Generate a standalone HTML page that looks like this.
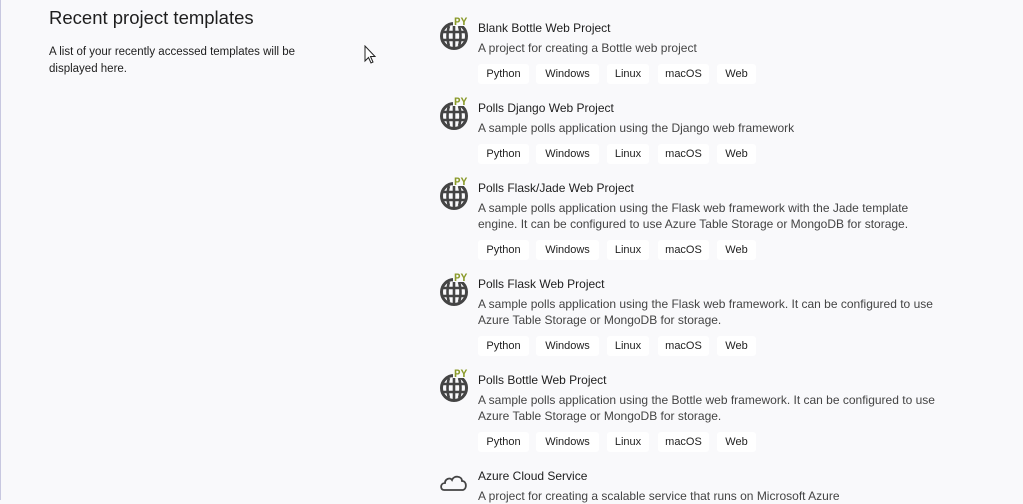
<!DOCTYPE html>
<html><head><style>
body{margin:0;width:1023px;height:500px;overflow:hidden;background:#f9f9fb;font-family:"Liberation Sans",sans-serif;color:#1e1e1e;position:relative}
.lb{position:absolute;left:0;top:0;width:1px;height:500px;background:#c8c8e0}
h1{position:absolute;left:49px;top:7px;margin:0;font-weight:normal;font-size:18.5px;color:#1e1e1e}
.p{position:absolute;left:49px;top:44px;font-size:11.5px;line-height:17px;width:280px}
.it{position:absolute;left:440px;width:520px}
.ic{position:absolute;left:0;top:-4px}
.t{position:absolute;left:38px;top:1px;font-size:12px;white-space:nowrap}
.d{position:absolute;left:38px;top:20px;font-size:12px;line-height:16px;color:#444;width:470px}
.tags{position:absolute;left:38px;height:20px;width:300px}
.tags span{position:absolute;top:0;background:#fff;border-radius:3px;font-size:11px;height:20px;line-height:20px;text-align:center;color:#222}
.tags span:nth-child(1){left:0;width:51px}
.tags span:nth-child(2){left:58px;width:63px}
.tags span:nth-child(3){left:129px;width:42px}
.tags span:nth-child(4){left:180px;width:51px}
.tags span:nth-child(5){left:239px;width:39px}
</style></head><body>
<div class="lb"></div>
<h1>Recent project templates</h1>
<div class="p">A list of your recently accessed templates will be displayed here.</div>
<svg style="position:absolute;left:364px;top:45px" width="14" height="20" viewBox="0 0 14 20"><path d="M1 1 L1 16 L4.5 12.5 L7 18 L9 17 L6.5 11.5 L11 11.5 Z" fill="#fff" stroke="#222" stroke-width="1"/></svg>

<svg width="0" height="0" style="position:absolute"><defs>
<g id="g"><circle cx="14" cy="20" r="12.5" fill="none" stroke="#444" stroke-width="3"/>
<path d="M3 16h22M3 24h22M14 8v24M9 10c-2 6-2 14 0 20M19 10c2 6 2 14 0 20" stroke="#444" stroke-width="2.6" fill="none"/>
<rect x="13" y="0" width="17" height="10" fill="#f9f9fb"/>
<text x="14" y="9" font-family="Liberation Mono,monospace" font-weight="bold" font-size="11" fill="#8a9a2a">PY</text></g></defs></svg>

<div class="it" style="top:20px"><svg class="ic" width="32" height="36"><use href="#g"/></svg><div class="t">Blank Bottle Web Project</div><div class="d">A project for creating a Bottle web project</div><div class="tags" style="top:44px"><span>Python</span><span>Windows</span><span>Linux</span><span>macOS</span><span>Web</span></div></div>

<div class="it" style="top:100px"><svg class="ic" width="32" height="36"><use href="#g"/></svg><div class="t">Polls Django Web Project</div><div class="d">A sample polls application using the Django web framework</div><div class="tags" style="top:44px"><span>Python</span><span>Windows</span><span>Linux</span><span>macOS</span><span>Web</span></div></div>

<div class="it" style="top:180px"><svg class="ic" width="32" height="36"><use href="#g"/></svg><div class="t">Polls Flask/Jade Web Project</div><div class="d">A sample polls application using the Flask web framework with the Jade template engine. It can be configured to use Azure Table Storage or MongoDB for storage.</div><div class="tags" style="top:60px"><span>Python</span><span>Windows</span><span>Linux</span><span>macOS</span><span>Web</span></div></div>

<div class="it" style="top:276px"><svg class="ic" width="32" height="36"><use href="#g"/></svg><div class="t">Polls Flask Web Project</div><div class="d">A sample polls application using the Flask web framework. It can be configured to use Azure Table Storage or MongoDB for storage.</div><div class="tags" style="top:60px"><span>Python</span><span>Windows</span><span>Linux</span><span>macOS</span><span>Web</span></div></div>

<div class="it" style="top:372px"><svg class="ic" width="32" height="36"><use href="#g"/></svg><div class="t">Polls Bottle Web Project</div><div class="d">A sample polls application using the Bottle web framework. It can be configured to use Azure Table Storage or MongoDB for storage.</div><div class="tags" style="top:60px"><span>Python</span><span>Windows</span><span>Linux</span><span>macOS</span><span>Web</span></div></div>

<div class="it" style="top:468px"><svg class="ic" width="32" height="34" style="top:0"><path d="M4 22c-4 0-4-7 1-7c0-4 5-6 7-3c2-5 10-4 10 1c5 0 5 8 1 9z" fill="none" stroke="#444" stroke-width="1.8"/></svg><div class="t">Azure Cloud Service</div><div class="d">A project for creating a scalable service that runs on Microsoft Azure</div></div>
</body></html>
